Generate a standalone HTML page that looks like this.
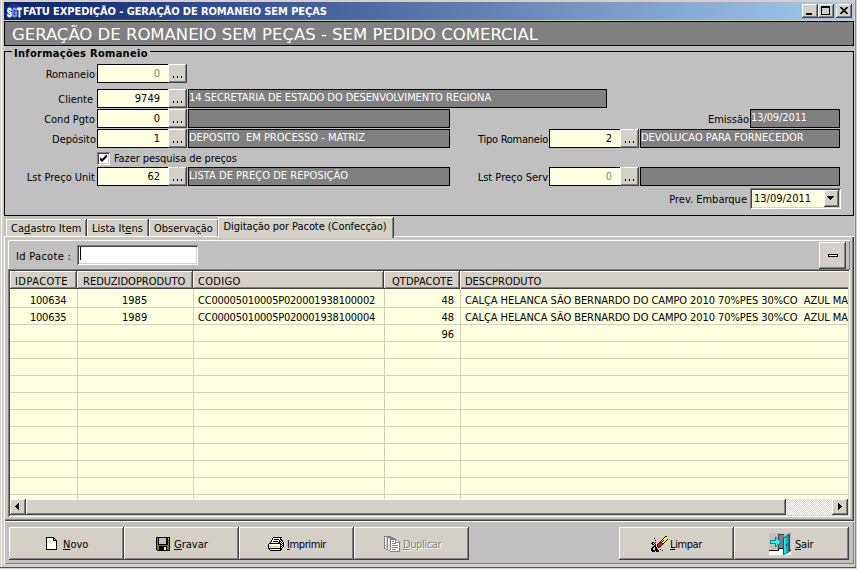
<!DOCTYPE html>
<html lang="pt-BR">
<head>
<meta charset="utf-8">
<title>FATU EXPEDIÇÃO - GERAÇÃO DE ROMANEIO SEM PEÇAS</title>
<style>
*{box-sizing:border-box;margin:0;padding:0}
html,body{width:857px;height:569px;overflow:hidden}
body{position:relative;background:#d4d0c8;font-family:"DejaVu Sans Condensed","DejaVu Sans","Liberation Sans",sans-serif;font-stretch:condensed;font-size:11px;line-height:13px;color:#000}
.a{position:absolute}
.t{position:absolute;white-space:nowrap;font-size:11px;line-height:13px;height:13px}
.r{text-align:right}
.w{color:#fff}
.g{color:#808080}
.b{font-weight:bold}
u{text-decoration:underline;text-underline-offset:1px}
/* frame */
#client{left:4px;top:21px;width:850px;height:543px;background:#c0c0c0}
#title{left:4px;top:2px;width:850px;height:18px;background:linear-gradient(to right,#0a246a,#a6caf0)}
.cb{position:absolute;top:2px;width:16px;height:14px;background:#d4d0c8;box-shadow:inset -1px -1px #404040,inset 1px 1px #fff,inset -2px -2px #808080}
#hdr{left:4px;top:21px;width:850px;height:25px;background:#808080;border:1px solid #000}
#grp{left:4px;top:51px;width:850px;height:165px;border:1px solid #000}
.f{position:absolute;height:19px;background:#ffffe1;border:1px solid #000;border-right:0}
.d{position:absolute;height:19px;background:#808080;border:1px solid #000}
.e{position:absolute;width:19px;height:19px;background:#d4d0c8;box-shadow:inset -1px -1px #404040,inset 1px 1px #fff,inset -2px -2px #808080}
.e i{position:absolute;left:5px;top:12px;width:1px;height:2px;background:#000;box-shadow:4px 0 #000,8px 0 #000}
.btn{position:absolute;top:527px;height:33px;background:#d4d0c8;box-shadow:inset -1px -1px #404040,inset 1px 1px #fff,inset -2px -2px #808080}
.hc{position:absolute;top:271px;height:18px;background:#d4d0c8;box-shadow:inset -1px -1px #404040,inset 1px 1px #fff,inset -2px -2px #808080}
.tab{position:absolute;top:219px;height:17px;background:#d4d0c8;border-top:1px solid #fff;border-left:1px solid #fff;box-shadow:inset -1px 0 #808080,1px 0 #404040}
</style>
</head>
<body>
<!-- window frame highlight -->
<div class="a" style="left:1px;top:0;width:1px;height:567px;background:#fff"></div><div class="a" style="left:855px;top:0;width:1px;height:568px;background:#8c8a84"></div><div class="a" style="left:0;top:567px;width:856px;height:1px;background:#55534e"></div>
<div class="a" id="client"></div>

<!-- title bar -->
<div class="a" id="title">
  <svg class="a" style="left:1px;top:1px" width="18" height="16" viewBox="0 0 18 16"><circle cx="9" cy="8" r="7.500" fill="#2a4fa8" opacity="0.450"/><text x="2" y="13.600" font-family="Liberation Sans, sans-serif" font-weight="bold" font-size="12.500" fill="#fff" stroke="#fff" stroke-width="0.800" textLength="14.500" lengthAdjust="spacingAndGlyphs">S<tspan fill="#7d9ae6" stroke="#7d9ae6">G</tspan>T</text></svg>
  <div class="t b w" id="ttl" style="letter-spacing:-0.09px;left:19px;top:3px">FATU EXPEDIÇÃO - GERAÇÃO DE ROMANEIO SEM PEÇAS</div>
  <div class="cb" style="left:798px"><div class="a" style="left:4px;top:9px;width:6px;height:2px;background:#000"></div></div>
  <div class="cb" style="left:814px"><div class="a" style="left:3px;top:2px;width:9px;height:9px;border:1px solid #000;border-top-width:2px"></div></div>
  <div class="cb" style="left:832px"><svg class="a" style="left:4px;top:3px" width="8" height="7" viewBox="0 0 8 7"><path d="M0.5 0L7.5 7M7.5 0L0.5 7" stroke="#000" stroke-width="1.6" fill="none"/></svg></div>
</div>

<!-- header -->
<div class="a" id="hdr"><div class="t w" id="hd" style="left:7px;top:2px;font-size:16.5px;line-height:21px;height:21px;transform:scaleX(1.111);transform-origin:0 0">GERAÇÃO DE ROMANEIO SEM PEÇAS - SEM PEDIDO COMERCIAL</div></div>

<!-- group box -->
<div class="a" id="grp"></div>
<div class="a" style="left:12px;top:48px;width:138px;height:10px;background:#c0c0c0"></div>
<div class="t b" id="gc" style="letter-spacing:0.3px;left:14px;top:47px">Informações Romaneio</div>

<!-- row: Romaneio -->
<div id="t1" class="t r" style="left:0;width:95px;top:68px">Romaneio</div>
<div class="f" style="left:97px;top:64px;width:71px"><div id="t2" class="t r g" style="right:8px;top:2px">0</div></div>
<div class="e" style="left:168px;top:64px"><i></i></div>

<!-- row: Cliente -->
<div id="t3" class="t r" style="left:0;width:93px;top:93px">Cliente</div>
<div class="f" style="left:97px;top:89px;width:71px"><div id="t4" class="t r" style="right:8px;top:2px">9749</div></div>
<div class="e" style="left:168px;top:89px"><i></i></div>
<div class="d" style="left:188px;top:89px;width:419px"><div id="t5" class="t w" style="letter-spacing:-0.07px;left:0px;top:1px">14 SECRETARIA DE ESTADO DO DESENVOLVIMENTO REGIONA</div></div>

<!-- row: Cond Pgto -->
<div id="t6" class="t r" style="left:0;width:95px;top:113px">Cond Pgto</div>
<div class="f" style="left:97px;top:109px;width:71px"><div id="t7" class="t r" style="right:8px;top:2px">0</div></div>
<div class="e" style="left:168px;top:109px"><i></i></div>
<div class="d" style="left:188px;top:109px;width:262px"></div>
<div id="t8" class="t r" style="left:650px;width:99px;top:113px">Emissão</div>
<div class="d" style="left:750px;top:109px;width:90px"><div id="t9" class="t w" style="letter-spacing:-0.1px;left:0px;top:1px">13/09/2011</div></div>

<!-- row: Depósito -->
<div id="t10" class="t r" style="left:0;width:96px;top:133px">Depósito</div>
<div class="f" style="left:97px;top:129px;width:71px"><div id="t11" class="t r" style="right:8px;top:2px">1</div></div>
<div class="e" style="left:168px;top:129px"><i></i></div>
<div class="d" style="left:188px;top:129px;width:262px"><div id="t12" class="t w" style="left:0px;top:1px">DEPOSITO&nbsp; EM PROCESSO - MATRIZ</div></div>
<div id="t13" class="t r" style="letter-spacing:-0.25px;left:450px;width:98px;top:133px">Tipo Romaneio</div>
<div class="f" style="left:549px;top:129px;width:71px"><div id="t14" class="t r" style="right:8px;top:2px">2</div></div>
<div class="e" style="left:620px;top:129px"><i></i></div>
<div class="d" style="left:640px;top:129px;width:200px"><div id="t15" class="t w" style="left:0px;top:1px">DEVOLUCAO PARA FORNECEDOR</div></div>

<!-- checkbox -->
<div class="a" style="left:97px;top:152px;width:13px;height:13px;background:#fff;box-shadow:inset 1px 1px #808080,inset -1px -1px #fff,inset 2px 2px #404040,inset -2px -2px #d4d0c8">
  <svg class="a" style="left:3px;top:3px" width="7" height="7" viewBox="0 0 7 7"><path d="M0 2v3l2 2l5-5v-3l-5 5z" fill="#000"/></svg>
</div>
<div id="t16" class="t" style="letter-spacing:-0.08px;left:114px;top:152px">Fazer pesquisa de preços</div>

<!-- row: Lst Preço Unit -->
<div id="t17" class="t r" style="left:0;width:95px;top:171px">Lst Preço Unit</div>
<div class="f" style="left:97px;top:167px;width:71px"><div id="t18" class="t r" style="right:8px;top:2px">62</div></div>
<div class="e" style="left:168px;top:167px"><i></i></div>
<div class="d" style="left:188px;top:167px;width:262px"><div id="t19" class="t w" style="letter-spacing:0.03px;left:0px;top:1px">LISTA DE PREÇO DE REPOSIÇÃO</div></div>
<div id="t20" class="t r" style="left:450px;width:98px;top:171px">Lst Preço Serv</div>
<div class="f" style="left:549px;top:167px;width:71px"><div id="t21" class="t r g" style="right:8px;top:2px">0</div></div>
<div class="e" style="left:620px;top:167px"><i></i></div>
<div class="d" style="left:640px;top:167px;width:200px"></div>

<!-- Prev. Embarque -->
<div id="t22" class="t r" style="left:600px;width:147px;top:193px">Prev. Embarque</div>
<div class="a" style="left:750px;top:188px;width:91px;height:21px;background:#ffffe1;box-shadow:inset 1px 1px #808080,inset -1px -1px #fff,inset 2px 2px #404040,inset -2px -2px #d4d0c8">
  <div id="t23" class="t" style="left:4px;top:4px">13/09/2011</div>
  <div class="a" style="left:74px;top:2px;width:15px;height:17px;background:#d4d0c8;box-shadow:inset -1px -1px #404040,inset 1px 1px #fff,inset -2px -2px #808080">
    <svg class="a" style="left:3px;top:6px" width="7" height="4" viewBox="0 0 7 4" shape-rendering="crispEdges"><path d="M0 0h7v1h-7zM1 1h5v1h-5zM2 2h3v1h-3zM3 3h1v1h-1z" fill="#000"/></svg>
  </div>
</div>

<!-- tabs -->
<div class="a" id="page" style="left:4px;top:236px;width:850px;height:285px;background:#c8c6c0;box-shadow:inset 1px 1px #fff,inset -1px -1px #404040,inset -2px -2px #808080"></div>
<div class="tab" style="left:6px;width:80px"><div id="t24" class="t" style="letter-spacing:0.05px;left:4px;top:2px">Ca<u>d</u>astro Item</div></div>
<div class="tab" style="left:87px;width:61px"><div id="t25" class="t" style="left:4px;top:2px">Lista It<u>e</u>ns</div></div>
<div class="tab" style="left:149px;width:69px"><div id="t26" class="t" style="left:4px;top:2px">Observa<u>ç</u>ão</div></div>
<div class="tab" style="left:218px;top:217px;width:175px;height:21px;box-shadow:inset -1px 0 #808080,1px 0 #404040"><div id="t27" class="t" style="letter-spacing:-0.07px;left:4.5px;top:2px">Digitação por Pacote (Confecção)</div></div>

<!-- inner top panel -->
<div class="a" style="left:8px;top:240px;width:842px;height:30px;background:#c0c0c0;box-shadow:inset 1px 1px #fff,inset -1px -1px #808080"></div>
<div id="t28" class="t" style="letter-spacing:0.3px;left:16px;top:250px">Id Pacote :</div>
<div class="a" style="left:77px;top:245px;width:121px;height:20px;background:#fff;box-shadow:inset 1px 1px #808080,inset -1px -1px #fff,inset 2px 2px #404040,inset -2px -2px #d4d0c8"><div class="a" style="left:3px;top:2px;width:1px;height:13px;background:#000"></div></div>
<div class="a" style="left:819px;top:242px;width:27px;height:27px;background:#d4d0c8;box-shadow:inset -1px -1px #404040,inset 1px 1px #fff,inset -2px -2px #808080"><div class="a" style="left:9px;top:12px;width:10px;height:3px;border:1px solid #000;background:#fff"></div></div>

<!-- grid -->
<div class="a" id="grid" style="left:8px;top:269px;width:842px;height:248px;background:#d4d0c8;box-shadow:inset 1px 1px #808080,inset -1px -1px #fff,inset 2px 2px #404040,inset -2px -2px #d4d0c8"></div>
<div class="a" style="left:10px;top:289px;width:838px;height:2px;background:#ffffe1"></div>
<div class="a" id="cells" style="left:10px;top:291px;width:838px;height:208px;overflow:hidden;background-color:#ffffe1;background-image:linear-gradient(to bottom,transparent 16px,#d2d1ba 16px);background-size:100% 17px"></div>
<!-- vertical grid lines -->
<div class="a" style="left:77px;top:289px;width:1px;height:210px;background:#d2d1ba"></div>
<div class="a" style="left:193px;top:289px;width:1px;height:210px;background:#d2d1ba"></div>
<div class="a" style="left:384px;top:289px;width:1px;height:210px;background:#d2d1ba"></div>
<div class="a" style="left:460px;top:289px;width:1px;height:210px;background:#d2d1ba"></div>
<!-- header cells -->
<div class="hc" style="left:10px;width:67px"><div id="t29" class="t" style="letter-spacing:0.45px;left:5px;top:4px">IDPACOTE</div></div>
<div class="hc" style="left:77px;width:116px"><div id="t30" class="t" style="left:6px;top:4px">REDUZIDOPRODUTO</div></div>
<div class="hc" style="left:193px;width:191px"><div id="t31" class="t" style="letter-spacing:0.3px;left:5px;top:4px">CODIGO</div></div>
<div class="hc" style="left:384px;width:76px"><div id="t32" class="t" style="letter-spacing:0.05px;left:8px;top:4px">QTDPACOTE</div></div>
<div class="hc" style="left:460px;width:388px;box-shadow:inset 1px 1px #fff,inset 0 -1px #404040,inset 0 -2px #808080"><div id="t33" class="t" style="left:5px;top:4px">DESCPRODUTO</div></div>
<!-- data rows -->
<div class="a" id="data" style="left:10px;top:289px;width:838px;height:210px;overflow:hidden">
  <div id="t34" class="t" style="letter-spacing:-0.25px;left:20px;top:5px">100634</div>
  <div id="t35" class="t" style="left:112px;top:5px">1985</div>
  <div id="t36" class="t" style="letter-spacing:-0.22px;left:188px;top:5px">CC00005010005P020001938100002</div>
  <div id="t37" class="t r" style="right:394px;top:5px">48</div>
  <div id="t38" class="t" style="letter-spacing:-0.07px;left:455px;top:5px">CALÇA HELANCA SÃO BERNARDO DO CAMPO 2010 70%PES 30%CO&nbsp; AZUL MARINHO</div>
  <div id="t39" class="t" style="letter-spacing:-0.25px;left:20px;top:22px">100635</div>
  <div id="t40" class="t" style="left:112px;top:22px">1989</div>
  <div id="t41" class="t" style="letter-spacing:-0.22px;left:188px;top:22px">CC00005010005P020001938100004</div>
  <div id="t42" class="t r" style="right:394px;top:22px">48</div>
  <div id="t43" class="t" style="letter-spacing:-0.07px;left:455px;top:22px">CALÇA HELANCA SÃO BERNARDO DO CAMPO 2010 70%PES 30%CO&nbsp; AZUL MARINHO</div>
  <div id="t44" class="t r" style="right:394px;top:39px">96</div>
</div>
<!-- horizontal scrollbar -->
<div class="a" style="left:10px;top:499px;width:838px;height:16px;background:#fff conic-gradient(#fff 25%,#d4d0c8 0 50%,#fff 0 75%,#d4d0c8 0) 0 0/2px 2px"></div>
<div class="a" style="left:10px;top:499px;width:16px;height:16px;background:#d4d0c8;box-shadow:inset -1px -1px #404040,inset 1px 1px #fff,inset -2px -2px #808080"><svg class="a" style="left:5px;top:4px" width="4" height="7" viewBox="0 0 4 7" shape-rendering="crispEdges"><path d="M3 0h1v7h-1zM2 1h1v5h-1zM1 2h1v3h-1zM0 3h1v1h-1z" fill="#000"/></svg></div>
<div class="a" style="left:26px;top:499px;width:760px;height:16px;background:#d4d0c8;box-shadow:inset -1px -1px #404040,inset 1px 1px #fff,inset -2px -2px #808080"></div>
<div class="a" style="left:832px;top:499px;width:16px;height:16px;background:#d4d0c8;box-shadow:inset -1px -1px #404040,inset 1px 1px #fff,inset -2px -2px #808080"><svg class="a" style="left:6px;top:4px" width="4" height="7" viewBox="0 0 4 7" shape-rendering="crispEdges"><path d="M0 0h1v7h-1zM1 1h1v5h-1zM2 2h1v3h-1zM3 3h1v1h-1z" fill="#000"/></svg></div>

<!-- bottom button panel -->
<div class="a" style="left:4px;top:521px;width:850px;height:43px;background:#c0c0c0;box-shadow:inset 1px 1px #fff,inset -1px -1px #808080"></div>
<div class="btn" style="left:9px;width:115px">
  <svg class="a" style="left:37px;top:10px" width="11" height="13" viewBox="0 0 11 13" shape-rendering="crispEdges"><path fill="#000" d="M0 0h8v1h-8zM0 1h1v1h-1zM7 1h2v1h-2zM0 2h1v1h-1zM7 2h1v1h-1zM9 2h1v1h-1zM0 3h1v1h-1zM7 3h4v1h-4zM0 4h1v1h-1zM10 4h1v1h-1zM0 5h1v1h-1zM10 5h1v1h-1zM0 6h1v1h-1zM10 6h1v1h-1zM0 7h1v1h-1zM10 7h1v1h-1zM0 8h1v1h-1zM10 8h1v1h-1zM0 9h1v1h-1zM10 9h1v1h-1zM0 10h1v1h-1zM10 10h1v1h-1zM0 11h1v1h-1zM10 11h1v1h-1zM0 12h11v1h-11z"/><path fill="#fff" d="M1 1h6v1h-6zM1 2h6v1h-6zM8 2h1v1h-1zM1 3h6v1h-6zM1 4h9v1h-9zM1 5h9v1h-9zM1 6h9v1h-9zM1 7h9v1h-9zM1 8h9v1h-9zM1 9h9v1h-9zM1 10h9v1h-9zM1 11h9v1h-9z"/></svg>
  <div id="t45" class="t" style="left:54px;top:11px"><u>N</u>ovo</div>
</div>
<div class="btn" style="left:124px;width:115px">
  <svg class="a" style="left:32px;top:10px" width="14" height="14" viewBox="0 0 14 14" shape-rendering="crispEdges"><path fill="#000" d="M0 0h14v1h-14zM0 1h1v1h-1zM2 1h1v1h-1zM10 1h2v1h-2zM13 1h1v1h-1zM0 2h1v1h-1zM2 2h1v1h-1zM10 2h2v1h-2zM13 2h1v1h-1zM0 3h1v1h-1zM2 3h1v1h-1zM10 3h2v1h-2zM13 3h1v1h-1zM0 4h1v1h-1zM2 4h1v1h-1zM10 4h2v1h-2zM13 4h1v1h-1zM0 5h1v1h-1zM2 5h1v1h-1zM10 5h2v1h-2zM13 5h1v1h-1zM0 6h1v1h-1zM2 6h1v1h-1zM10 6h2v1h-2zM13 6h1v1h-1zM0 7h1v1h-1zM2 7h10v1h-10zM13 7h1v1h-1zM0 8h1v1h-1zM13 8h1v1h-1zM0 9h1v1h-1zM3 9h8v1h-8zM13 9h1v1h-1zM0 10h1v1h-1zM3 10h5v1h-5zM10 10h1v1h-1zM13 10h1v1h-1zM0 11h1v1h-1zM3 11h5v1h-5zM10 11h1v1h-1zM13 11h1v1h-1zM0 12h1v1h-1zM3 12h5v1h-5zM10 12h1v1h-1zM13 12h1v1h-1zM1 13h13v1h-13z"/><path fill="#808000" d="M1 1h1v1h-1zM1 2h1v1h-1zM12 2h1v1h-1zM1 3h1v1h-1zM12 3h1v1h-1zM1 4h1v1h-1zM12 4h1v1h-1zM1 5h1v1h-1zM12 5h1v1h-1zM1 6h1v1h-1zM12 6h1v1h-1zM1 7h1v1h-1zM12 7h1v1h-1zM1 8h12v1h-12zM1 9h2v1h-2zM11 9h2v1h-2zM1 10h2v1h-2zM11 10h2v1h-2zM1 11h2v1h-2zM11 11h2v1h-2zM1 12h2v1h-2zM11 12h2v1h-2z"/><path fill="#c0c0c0" d="M3 1h7v1h-7zM3 2h7v1h-7zM3 3h7v1h-7zM3 4h7v1h-7zM3 5h7v1h-7zM3 6h7v1h-7z"/><path fill="#fff" d="M12 1h1v1h-1zM8 10h2v1h-2zM8 11h2v1h-2zM8 12h2v1h-2z"/></svg>
  <div id="t46" class="t" style="left:50px;top:11px"><u>G</u>ravar</div>
</div>
<div class="btn" style="left:239px;width:115px">
  <svg class="a" style="left:29px;top:10px" width="16" height="14" viewBox="0 0 16 14" shape-rendering="crispEdges"><path fill="#000" d="M5 0h9v1h-9zM4 1h1v1h-1zM12 1h1v1h-1zM4 2h1v1h-1zM6 2h5v1h-5zM12 2h2v1h-2zM3 3h1v1h-1zM11 3h1v1h-1zM13 3h2v1h-2zM3 4h1v1h-1zM5 4h5v1h-5zM11 4h2v1h-2zM14 4h1v1h-1zM2 5h1v1h-1zM10 5h2v1h-2zM13 5h1v1h-1zM15 5h1v1h-1zM1 6h12v1h-12zM14 6h2v1h-2zM0 7h1v1h-1zM12 7h2v1h-2zM15 7h1v1h-1zM0 8h1v1h-1zM12 8h1v1h-1zM14 8h2v1h-2zM0 9h1v1h-1zM12 9h2v1h-2zM15 9h1v1h-1zM0 10h1v1h-1zM12 10h1v1h-1zM14 10h1v1h-1zM0 11h14v1h-14zM1 12h1v1h-1zM12 12h2v1h-2zM2 13h11v1h-11z"/><path fill="#fff" d="M5 1h7v1h-7zM5 2h1v1h-1zM11 2h1v1h-1zM4 3h7v1h-7zM12 3h1v1h-1zM4 4h1v1h-1zM10 4h1v1h-1zM13 4h1v1h-1zM3 5h7v1h-7zM12 5h1v1h-1zM14 5h1v1h-1zM13 6h1v1h-1zM1 7h11v1h-11zM14 7h1v1h-1zM1 8h11v1h-11zM13 8h1v1h-1zM11 9h1v1h-1zM14 9h1v1h-1zM1 10h11v1h-11zM13 10h1v1h-1zM2 12h10v1h-10z"/><path fill="#c0c0c0" d="M1 9h5v1h-5zM9 9h2v1h-2z"/><path fill="#c8d800" d="M6 9h3v1h-3z"/></svg>
  <div id="t47" class="t" style="letter-spacing:-0.4px;left:48px;top:11px"><u>I</u>mprimir</div>
</div>
<div class="btn" style="left:354px;width:115px">
  <svg class="a" style="left:30px;top:9px" width="16" height="16" viewBox="0 0 16 16" shape-rendering="crispEdges"><path fill="#808080" d="M0 0h7v1h-7zM0 1h1v1h-1zM3 1h6v1h-6zM0 2h1v1h-1zM3 2h1v1h-1zM6 2h5v1h-5zM0 3h1v1h-1zM3 3h1v1h-1zM6 3h7v1h-7zM0 4h1v1h-1zM3 4h1v1h-1zM6 4h1v1h-1zM11 4h1v1h-1zM13 4h1v1h-1zM0 5h1v1h-1zM3 5h1v1h-1zM6 5h1v1h-1zM8 5h2v1h-2zM11 5h1v1h-1zM14 5h1v1h-1zM0 6h1v1h-1zM3 6h1v1h-1zM6 6h1v1h-1zM11 6h5v1h-5zM0 7h1v1h-1zM3 7h1v1h-1zM6 7h1v1h-1zM8 7h4v1h-4zM15 7h1v1h-1zM0 8h1v1h-1zM3 8h1v1h-1zM6 8h1v1h-1zM15 8h1v1h-1zM0 9h1v1h-1zM3 9h1v1h-1zM6 9h1v1h-1zM8 9h6v1h-6zM15 9h1v1h-1zM0 10h1v1h-1zM3 10h1v1h-1zM6 10h1v1h-1zM15 10h1v1h-1zM0 11h1v1h-1zM3 11h1v1h-1zM6 11h1v1h-1zM8 11h6v1h-6zM15 11h1v1h-1zM0 12h2v1h-2zM3 12h1v1h-1zM6 12h1v1h-1zM15 12h1v1h-1zM2 13h2v1h-2zM6 13h1v1h-1zM8 13h4v1h-4zM15 13h1v1h-1zM4 14h2v1h-2zM15 14h1v1h-1zM6 15h10v1h-10z"/><path fill="#fff" d="M1 1h1v1h-1zM1 2h1v1h-1zM4 2h1v1h-1zM1 3h1v1h-1zM4 3h1v1h-1zM1 4h1v1h-1zM4 4h1v1h-1zM7 4h4v1h-4zM12 4h1v1h-1zM1 5h1v1h-1zM4 5h1v1h-1zM7 5h1v1h-1zM10 5h1v1h-1zM12 5h2v1h-2zM1 6h1v1h-1zM4 6h1v1h-1zM7 6h4v1h-4zM1 7h1v1h-1zM4 7h1v1h-1zM7 7h1v1h-1zM12 7h3v1h-3zM1 8h1v1h-1zM4 8h1v1h-1zM7 8h8v1h-8zM1 9h1v1h-1zM4 9h1v1h-1zM7 9h1v1h-1zM14 9h1v1h-1zM1 10h1v1h-1zM4 10h1v1h-1zM7 10h8v1h-8zM1 11h1v1h-1zM4 11h1v1h-1zM7 11h1v1h-1zM14 11h1v1h-1zM2 12h1v1h-1zM4 12h1v1h-1zM7 12h8v1h-8zM4 13h1v1h-1zM7 13h1v1h-1zM12 13h3v1h-3zM6 14h9v1h-9z"/></svg>
  <div id="t48" class="t" style="letter-spacing:-0.4px;left:50px;top:12px;color:#fff"><u>D</u>uplicar</div>
  <div id="t49" class="t g" style="letter-spacing:-0.4px;left:49px;top:11px"><u>D</u>uplicar</div>
</div>
<div class="btn" style="left:619px;width:115px">
  <svg class="a" style="left:32px;top:9px" width="17" height="16" viewBox="0 0 17 16" shape-rendering="crispEdges"><path fill="#000" d="M14 0h2v1h-2zM13 1h1v1h-1zM3 2h1v1h-1zM12 2h1v1h-1zM11 3h1v1h-1zM16 3h1v1h-1zM4 4h1v1h-1zM10 4h1v1h-1zM12 4h1v1h-1zM15 4h1v1h-1zM9 5h1v1h-1zM11 5h1v1h-1zM14 5h1v1h-1zM1 6h2v1h-2zM4 6h1v1h-1zM8 6h1v1h-1zM10 6h1v1h-1zM13 6h1v1h-1zM0 7h2v1h-2zM3 7h1v1h-1zM7 7h1v1h-1zM11 7h2v1h-2zM1 8h2v1h-2zM4 8h1v1h-1zM6 8h1v1h-1zM11 8h1v1h-1zM3 9h2v1h-2zM6 9h1v1h-1zM10 9h1v1h-1zM2 10h3v1h-3zM6 10h1v1h-1zM9 10h1v1h-1zM1 11h2v1h-2zM4 11h2v1h-2zM7 11h2v1h-2zM0 12h2v1h-2zM4 12h2v1h-2zM0 13h2v1h-2zM4 13h3v1h-3zM9 13h1v1h-1zM0 14h8v1h-8zM11 14h1v1h-1zM1 15h3v1h-3zM5 15h3v1h-3z"/><path fill="#ffff00" d="M14 1h3v1h-3zM13 2h4v1h-4zM12 3h4v1h-4zM11 4h1v1h-1zM13 4h2v1h-2zM10 5h1v1h-1zM12 5h2v1h-2zM11 6h2v1h-2z"/><path fill="#e8101c" d="M9 6h1v1h-1zM8 7h3v1h-3zM7 8h4v1h-4zM7 9h3v1h-3zM7 10h2v1h-2z"/></svg>
  <div id="t50" class="t" style="letter-spacing:-0.4px;left:51px;top:11px"><u>L</u>impar</div>
</div>
<div class="btn" style="left:734px;width:115px">
  <svg class="a" style="left:35px;top:6px" width="22" height="22" viewBox="0 0 22 22"><g shape-rendering="crispEdges"><rect width="22" height="22" fill="#c0c0c0"/><path d="M0 18h22v4h-22zM10 16h5v2h-5z" fill="#fff"/><rect x="9" y="1" width="6" height="15" fill="#808080"/><path d="M9 1h6v1h-6zM9 1h1v15h-1z" fill="#404040"/><path d="M0 17h10v1h-10zM9 15h1v3h-1zM9 15h6v1h-6zM20 17h2v1h-2z" fill="#000"/></g><path d="M14.500 5.200L20.500 0.800V18.600L14.500 21.700z" fill="#00b4b4" stroke="#005858" stroke-width="0.900"/><path d="M15 5.500L16.800 4.200V20L15 21z" fill="#38e0e0"/><path d="M19.300 2L20.500 1.200V18.300L19.300 19z" fill="#006464"/><rect x="17" y="11" width="1" height="2" fill="#003030"/><path d="M1.500 7.500H6.500V4L12 9L6.500 14V10.500H1.500z" fill="#38f4f4" stroke="#008888" stroke-width="1"/></svg>
  <div id="t51" class="t" style="letter-spacing:-0.2px;left:61px;top:11px"><u>S</u>air</div>
</div>
</body>
</html>
